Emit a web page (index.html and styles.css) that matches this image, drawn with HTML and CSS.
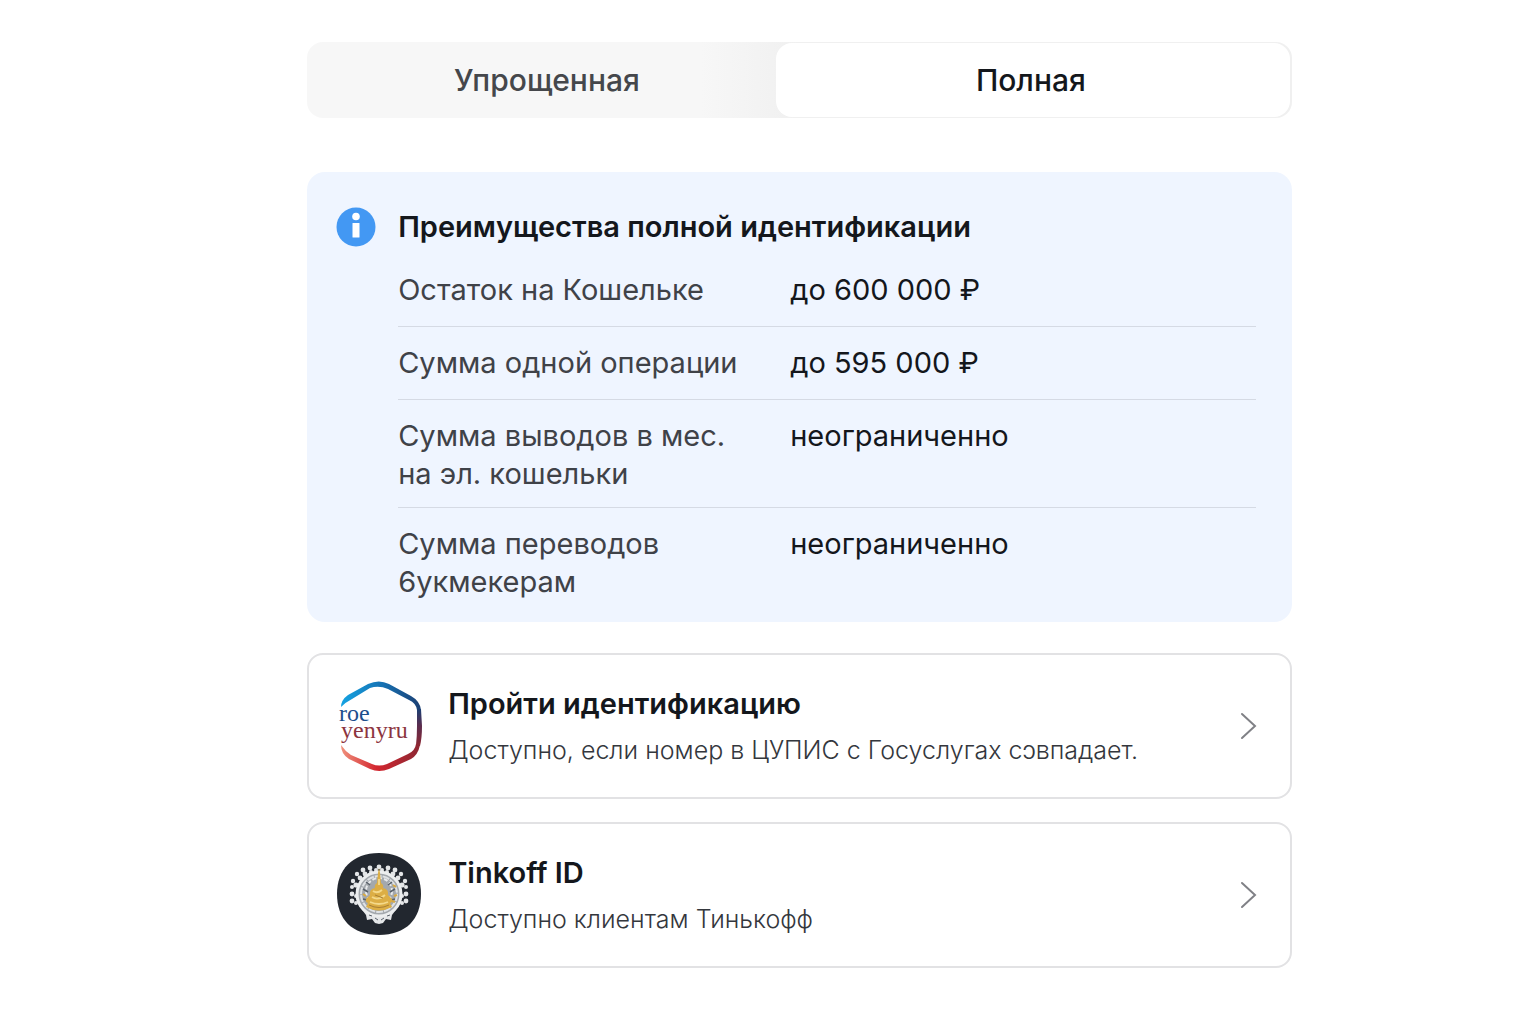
FILE: index.html
```html
<!DOCTYPE html>
<html lang="ru">
<head>
<meta charset="UTF-8">
<meta name="viewport" content="width=device-width, initial-scale=1.0">
<title>Идентификация</title>
<link rel="stylesheet" href="styles.css">
</head>
<body>

<main class="page">
    <!-- Identification type switch -->
    <div class="tabs" role="tablist">
        <button type="button" class="tab" role="tab" aria-selected="false">Упрощенная</button>
        <button type="button" class="tab tab-active" role="tab" aria-selected="true">Полная</button>
    </div>

    <!-- Limits for the full identification -->
    <section class="info">
        <svg class="info-icon" viewBox="0 0 40 40" aria-hidden="true">
            <circle cx="20" cy="20" r="19.5" fill="#4398f3"/>
            <circle cx="20" cy="9.5" r="3.8" fill="#fff"/>
            <rect x="16.5" y="16" width="7" height="14.5" rx="0.5" fill="#fff"/>
        </svg>
        <div class="info-body">
            <h2>Преимущества полной идентификации</h2>
            <table class="limits">
                <tbody>
                    <tr>
                        <th scope="row">Остаток на Кошельке</th>
                        <td>до 600 000 ₽</td>
                    </tr>
                    <tr>
                        <th scope="row">Сумма одной операции</th>
                        <td>до 595 000 ₽</td>
                    </tr>
                    <tr class="tight">
                        <th scope="row">Сумма выводов в мес.<br>на эл. кошельки</th>
                        <td>неограниченно</td>
                    </tr>
                    <tr>
                        <th scope="row">Сумма переводов<br>6укмекерам</th>
                        <td>неограниченно</td>
                    </tr>
                </tbody>
            </table>
        </div>
    </section>

    <!-- Ways to pass the identification -->
    <nav class="methods">
        <a href="#" class="method">
            <svg class="logo" viewBox="0 0 88 92" aria-hidden="true">
                <defs>
                    <linearGradient id="top" x1="0" y1="0" x2="1" y2="0">
                        <stop offset="0" stop-color="#15a3e2"/>
                        <stop offset="0.5" stop-color="#1673b5"/>
                        <stop offset="1" stop-color="#1b3f73"/>
                    </linearGradient>
                    <linearGradient id="side" x1="0" y1="0" x2="0" y2="1">
                        <stop offset="0" stop-color="#1b3f73"/>
                        <stop offset="0.45" stop-color="#5b2d4e"/>
                        <stop offset="1" stop-color="#8c2733"/>
                    </linearGradient>
                    <linearGradient id="bottom" x1="0" y1="0" x2="1" y2="0">
                        <stop offset="0" stop-color="#f0917c"/>
                        <stop offset="0.45" stop-color="#d3262f"/>
                        <stop offset="1" stop-color="#8c2733"/>
                    </linearGradient>
                </defs>
                <path d="M5 27 Q5 20 12 15 L32 4 Q43 -1 53 4 L75 16 Q84 21 85 30 L81 30 Q80 23 73 20 L52 9 Q43 5 34 8 L16 19 Q10 22 5 27 Z" fill="url(#top)"/>
                <path d="M85 29 L86 46 Q86 58 84 66 L80 65 Q81 56 81 46 L81 29 Z" fill="url(#side)"/>
                <path d="M5 65 Q9 71 15 75 L36 84 Q43 87 51 84 L72 74 Q79 71 80 64 L84 65 Q82 75 75 79 L53 89 Q43 93 34 89 L13 79 Q5 74 5 65 Z" fill="url(#bottom)"/>
                <text class="logo-text">
                    <tspan x="3" y="41" fill="#1d4f8c">roe</tspan>
                    <tspan x="5" y="58" fill="#8c3540">yenyru</tspan>
                </text>
            </svg>
            <div class="method-text">
                <h3>Пройти идентификацию</h3>
                <p>Доступно, если номер в ЦУПИС с Госуслугах сɔвпадает.</p>
            </div>
            <svg class="chevron" viewBox="0 0 18 30" aria-hidden="true">
                <path d="M3 3 L16 15 L3 27"/>
            </svg>
        </a>
        <a href="#" class="method">
            <svg class="logo" viewBox="0 0 88 92" aria-hidden="true">
                <path d="M43 4 C70 4 85 21 85 45 C85 70 70 86 43 86 C16 86 1 70 1 45 C1 21 16 4 43 4 Z" fill="#22272f"/>
                <!-- beads round the medallion -->
                <g fill="#e4e6e8">
                    <circle cx="43" cy="18" r="2.4"/>
                    <circle cx="40" cy="21" r="2"/>
                    <circle cx="46" cy="21" r="2"/>
                    <circle cx="34" cy="19" r="2.4"/>
                    <circle cx="52" cy="19" r="2.4"/>
                    <circle cx="35" cy="23" r="2"/>
                    <circle cx="51" cy="23" r="2"/>
                    <circle cx="27" cy="21" r="2.4"/>
                    <circle cx="59" cy="21" r="2.4"/>
                    <circle cx="29" cy="25" r="2.4"/>
                    <circle cx="57" cy="25" r="2.4"/>
                    <circle cx="21" cy="25" r="2.2"/>
                    <circle cx="65" cy="25" r="2.2"/>
                    <circle cx="24" cy="29" r="2.4"/>
                    <circle cx="62" cy="29" r="2.4"/>
                    <circle cx="17" cy="32" r="2.2"/>
                    <circle cx="69" cy="32" r="2.2"/>
                    <circle cx="20" cy="36" r="2.6"/>
                    <circle cx="66" cy="36" r="2.6"/>
                    <circle cx="16" cy="38" r="2"/>
                    <circle cx="70" cy="38" r="2"/>
                    <circle cx="16" cy="45" r="2.4"/>
                    <circle cx="70" cy="45" r="2.4"/>
                    <circle cx="20" cy="47" r="2"/>
                    <circle cx="66" cy="47" r="2"/>
                    <circle cx="16" cy="52" r="2.4"/>
                    <circle cx="70" cy="52" r="2.4"/>
                    <circle cx="20" cy="54" r="2"/>
                    <circle cx="66" cy="54" r="2"/>
                    <path d="M24 58 L30 66 L31 71 L36 70 L39 74 L43 75 L47 74 L50 70 L55 71 L56 66 L62 58 Z"/>
                </g>
                <circle cx="43" cy="45" r="23" fill="#a3a8ad"/>
                <circle cx="43" cy="45" r="22" fill="none" stroke="#eceeef" stroke-width="3"/>
                <circle cx="43" cy="45" r="18" fill="none" stroke="#dfe2e5" stroke-width="2" stroke-dasharray="7 1"/>
                <circle cx="43" cy="42" r="13" fill="none" stroke="#e8eaec" stroke-width="2" stroke-dasharray="4 2"/>
                <path d="M27 40 l5 3 M59 40 l-5 3 M30 33 l4 3 M56 33 l-4 3 M27 50 l4 1 M59 50 l-4 1" stroke="#59616a" stroke-width="1.5"/>
                <path d="M42 24 L43 19 L44 24 L45 34 Q48 36 47 39 Q53 40 52 46 L56 50 Q57 53 54 54 L56 58 Q43 65 30 58 L32 54 Q29 53 30 50 L34 46 Q33 40 39 39 Q38 36 41 34 Z" fill="#dcae45"/>
                <path d="M37 42 Q41 45 46 41 M36 48 Q42 52 49 46 M34 53 Q43 57 52 53 M43 30 V36" fill="none" stroke="#f4d98a" stroke-width="1.8"/>
                <path d="M39 46 L47 49 M33 56 Q43 61 53 56" fill="none" stroke="#a87f33" stroke-width="1"/>
                <path d="M27 45 l3 2 M57 36 l3 2 M58 47 l3 -1 M56 52 l3 1" stroke="#d9aa42" stroke-width="2"/>
                <path d="M33 66 l3 1 M39 69 l3 2 M45 71 l3 -2 M51 67 l3 -1" stroke="#59616a" stroke-width="1"/>
            </svg>
            <div class="method-text">
                <h3>Tinkoff ID</h3>
                <p>Доступно клиентам Тинькофф</p>
            </div>
            <svg class="chevron" viewBox="0 0 18 30" aria-hidden="true">
                <path d="M3 3 L16 15 L3 27"/>
            </svg>
        </a>
    </nav>
</main>

</body>
</html>
```
FILE: styles.css
```css
* {
    box-sizing: border-box;
}
body {
    margin: 0;
    background: #fff;
    color: #14171c;
    font-family: Inter, "Liberation Sans", sans-serif;
}
h2, h3, p {
    margin: 0;
}
.page {
    padding: 42px 244px 56px 20%;
}

/* Tabs */
.tabs {
    display: grid;
    grid-template-columns: 10fr 11fr;
    padding: 1px 2px 1px 1px;
    border-radius: 16px;
    background: linear-gradient(90deg, #f7f7f7 40%, #f0f0f0 50%);
}
.tab {
    height: 74px;
    padding: 0 0 0 10px;
    border: none;
    border-radius: 16px;
    background: none;
    color: #45474b;
    font-family: inherit;
    font-size: 30px;
    font-weight: 500;
    cursor: pointer;
}
.tab-active {
    padding: 0 4px 0 0;
    background: #fff;
    color: #14171c;
}

/* Info block */
.info {
    display: flex;
    gap: 22px;
    margin-top: 54px;
    padding: 35px 36px 21px 29px;
    border-radius: 18px;
    background: #eff5ff;
}
.info-icon {
    flex: none;
    width: 40px;
    height: 40px;
}
.info-body {
    flex: 1;
}
h2 {
    font-size: 29px;
    font-weight: 600;
    line-height: 40px;
}
.limits {
    width: 100%;
    margin-top: 7px;
    border-collapse: collapse;
    font-size: 29px;
    line-height: 38px;
}
.limits th,
.limits td {
    padding: 17px 0;
    border-bottom: 1px solid #d5dae4;
    font-weight: 400;
    text-align: left;
    vertical-align: top;
}
.limits th {
    width: 392px;
    color: #3f4248;
}
.limits .tight th,
.limits .tight td {
    padding-bottom: 14px;
}
.limits tr:last-child th,
.limits tr:last-child td {
    padding-bottom: 0;
    border-bottom: none;
}

/* Methods */
.methods {
    display: grid;
    gap: 23px;
    margin-top: 31px;
}
.method {
    display: flex;
    align-items: center;
    min-height: 146px;
    padding: 24px 33px 24px 27px;
    border: 2px solid #e2e2e4;
    border-radius: 16px;
    color: inherit;
    text-decoration: none;
}
.logo {
    flex: none;
    width: 88px;
    height: 92px;
}
.logo-text {
    font-family: "Liberation Serif", serif;
    font-size: 24px;
}
.method-text {
    flex: 1;
    padding-left: 24px;
}
h3 {
    font-size: 29px;
    font-weight: 600;
    line-height: 40px;
}
.method p {
    margin-top: 8px;
    color: #34373d;
    font-size: 25px;
    font-weight: 300;
    line-height: 36px;
}
.chevron {
    flex: none;
    width: 18px;
    height: 30px;
    fill: none;
    stroke: #808186;
    stroke-width: 2;
    stroke-linecap: round;
}
```
